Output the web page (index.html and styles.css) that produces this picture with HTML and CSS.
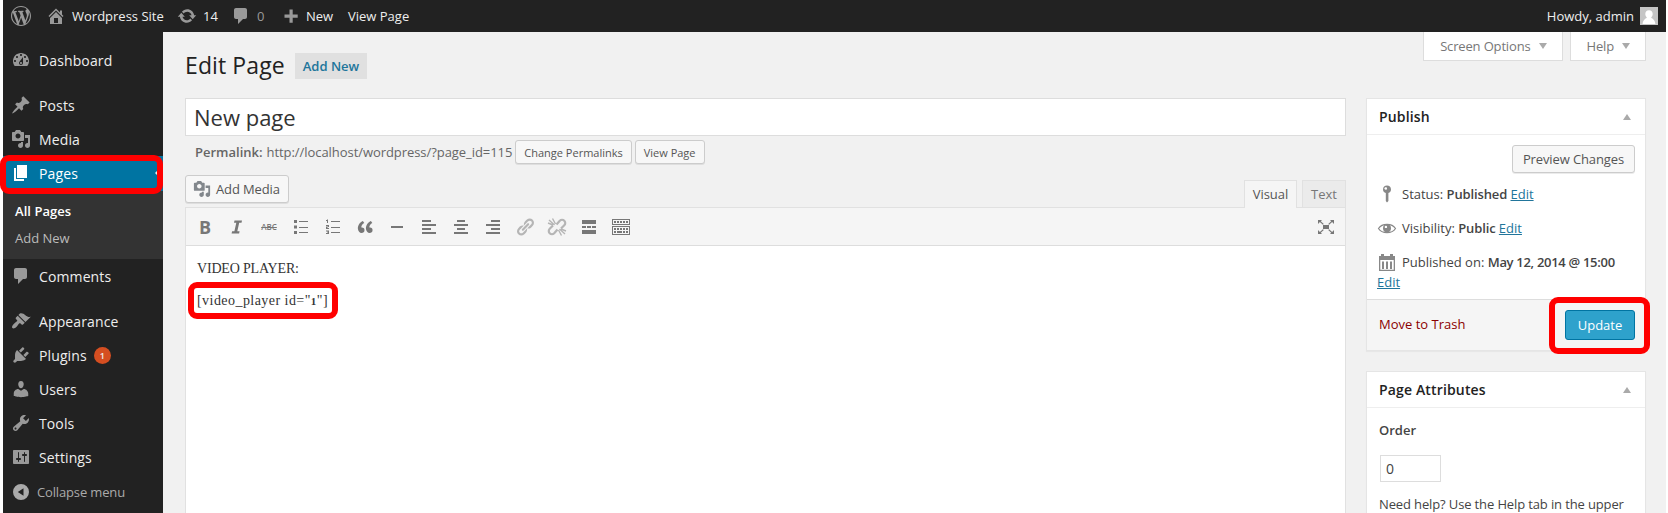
FILE: index.html
```html
<!DOCTYPE html>
<html lang="en">
<head>
<meta charset="utf-8">
<title>Edit Page</title>
<link rel="stylesheet" href="styles.css">
</head>
<body>
<svg class="defs" width="0" height="0">
  <symbol id="media" viewBox="0 0 20 20"><path d="M13 11V4c0-.55-.45-1-1-1h-1.67L9 1H5L3.67 3H2c-.55 0-1 .45-1 1v7c0 .55.45 1 1 1h10c.55 0 1-.45 1-1zM7 4.5c1.38 0 2.5 1.12 2.5 2.5S8.38 9.5 7 9.5 4.5 8.38 4.5 7 5.62 4.5 7 4.5zM14 6h5v10.5c0 1.38-1.12 2.5-2.5 2.5S14 17.88 14 16.5s1.12-2.5 2.5-2.5c.17 0 .34.02.5.05V9h-3V6zm-4 8.05V13h2v3.5c0 1.38-1.12 2.5-2.5 2.5S7 17.88 7 16.5 8.12 14 9.5 14c.17 0 .34.02.5.05z"/></symbol>
  <symbol id="comment" viewBox="0 0 20 20"><path d="M5 2h9c1.1 0 2 .9 2 2v7c0 1.1-.9 2-2 2h-2l-5 5v-5H5c-1.1 0-2-.9-2-2V4c0-1.1.9-2 2-2z"/></symbol>
</svg>
<div class="screen">
  <header class="adminbar">
    <svg class="icon ab-logo" viewBox="0 0 20 20"><path d="M20 10c0-5.51-4.49-10-10-10C4.48 0 0 4.49 0 10c0 5.52 4.48 10 10 10 5.51 0 10-4.48 10-10zM7.78 15.37L4.37 6.22c.55-.02 1.17-.08 1.17-.08.5-.06.44-1.13-.06-1.11 0 0-1.45.11-2.37.11-.18 0-.37 0-.58-.01C4.12 2.69 6.87 1.11 10 1.11c2.33 0 4.45.87 6.05 2.34-.68-.11-1.65.39-1.65 1.58 0 .74.45 1.36.9 2.1.35.61.55 1.36.55 2.46 0 1.49-1.4 5-1.4 5l-3.03-8.37c.54-.02.82-.17.82-.17.5-.05.44-1.25-.06-1.22 0 0-1.44.12-2.38.12-.87 0-2.33-.12-2.33-.12-.5-.03-.56 1.2-.06 1.22l.92.08 1.26 3.41zM17.41 10c.24-.64.74-1.87.43-4.25.7 1.29 1.05 2.71 1.05 4.25 0 3.29-1.73 6.24-4.4 7.78.97-2.59 1.94-5.2 2.92-7.78zM6.1 18.09C3.12 16.65 1.11 13.53 1.11 10c0-1.3.23-2.48.72-3.59C3.25 10.3 4.67 14.2 6.1 18.09zm4.03-6.63l2.58 6.98c-.86.29-1.76.45-2.71.45-.79 0-1.57-.11-2.29-.33.81-2.38 1.62-4.74 2.42-7.1z"/></svg>
    <span class="ab-item ab-site"><svg class="icon" viewBox="0 0 20 20"><path d="M16 8.5l1.53 1.53-1.06 1.06L10 4.6l-6.47 6.49-1.06-1.06L10 2.5l4 4v-2h2v4zm-6-2.46l6 5.99V18H4v-5.97zM12 17v-5H8v5h4z"/></svg><span>Wordpress Site</span></span>
    <span class="ab-item ab-updates"><svg class="icon" viewBox="0 0 20 20"><path d="M10.2 3.28c3.53 0 6.43 2.61 6.92 6h2.08l-3.5 4-3.5-4h2.32c-.45-1.97-2.21-3.45-4.32-3.45-1.45 0-2.73.71-3.54 1.78L4.95 5.66C6.23 4.2 8.11 3.28 10.2 3.28zm-.4 13.44c-3.52 0-6.43-2.61-6.92-6H.8l3.5-4 3.5 4H5.48c.45 1.97 2.21 3.45 4.32 3.45 1.45 0 2.73-.71 3.54-1.78l1.71 1.95c-1.28 1.46-3.15 2.38-5.25 2.38z"/></svg><span>14</span></span>
    <span class="ab-item ab-comments"><svg class="icon"><use href="#comment"/></svg><span>0</span></span>
    <span class="ab-item ab-new"><svg class="icon" viewBox="0 0 20 20"><path d="M8.5 3.5h3.2v5h5v3.2h-5v5H8.500v-5h-5V8.500h5z"/></svg><span>New</span></span>
    <span class="ab-item ab-view">View Page</span>
    <span class="ab-item ab-user">Howdy, admin
      <svg class="avatar" viewBox="0 0 18 18"><rect width="18" height="18" fill="#c5c5c5"/><path d="M9 3.200c2.300 0 3.700 1.600 3.700 3.800 0 1.500-.6 2.800-1.600 3.500.2 1 3.900 1.300 4.300 6.500H2.600c.4-5.200 4.100-5.500 4.300-6.500-1-.7-1.600-2-1.600-3.500 0-2.200 1.400-3.800 3.700-3.800z" fill="#fff"/></svg></span>
  </header>

  <div class="body">
    <nav class="menu">
      <a class="item"><svg class="icon" viewBox="0 0 20 20"><path d="M3.76 16h12.48c1.1-1.37 1.76-3.11 1.76-5 0-4.42-3.58-8-8-8s-8 3.580-8 8c0 1.890.66 3.630 1.760 5zM10 4c.55 0 1 .45 1 1s-.45 1-1 1-1-.45-1-1 .45-1 1-1zM6 6c.55 0 1 .45 1 1s-.45 1-1 1-1-.45-1-1 .45-1 1-1zm8 0c.55 0 1 .45 1 1s-.45 1-1 1-1-.45-1-1 .45-1 1-1zm-5.370 5.550L12 7v6c0 1.100-.9 2-2 2s-2-.9-2-2c0-.57.24-1.080.63-1.450zM4 10c.55 0 1 .45 1 1s-.45 1-1 1-1-.45-1-1 .45-1 1-1zm12 0c.55 0 1 .45 1 1s-.45 1-1 1-1-.45-1-1 .45-1 1-1zm-5 3c0-.55-.45-1-1-1s-1 .45-1 1 .45 1 1 1 1-.45 1-1z"/></svg>Dashboard</a>
      <div class="sep"></div>
      <a class="item"><svg class="icon" viewBox="0 0 20 20"><path d="M10.440 3.020l1.820-1.820 6.360 6.350-1.830 1.820c-1.050-.68-2.480-.57-3.410.36l-.75.75c-.92.93-1.040 2.350-.35 3.410l-1.830 1.820-2.410-2.410-2.800 2.790c-.42.42-3.380 2.710-3.800 2.290s1.860-3.390 2.280-3.810l2.790-2.790L4.100 9.360l1.830-1.820c1.050.69 2.480.57 3.400-.36l.75-.75c.93-.92 1.050-2.350.36-3.410z"/></svg>Posts</a>
      <a class="item"><svg class="icon"><use href="#media"/></svg>Media</a>
      <a class="item current"><svg class="icon" viewBox="0 0 20 20"><path d="M6 15V2h10v13H6zm-1 1h8v2H3V5h2v11z"/></svg>Pages</a>
      <div class="submenu"><a class="on">All Pages</a><a>Add New</a></div>
      <a class="item"><svg class="icon"><use href="#comment"/></svg>Comments</a>
      <div class="sep"></div>
      <a class="item"><svg class="icon" viewBox="0 0 20 20"><path d="M14.480 11.060L7.410 3.990l1.500-1.500c.5-.56 2.300-.47 3.510.32 1.210.8 1.430 1.280 2.910 2.100 1.180.64 2.450 1.260 4.450.85zm-.71.71L6.700 4.700 4.930 6.470c-.39.39-.39 1.020 0 1.410l1.060 1.060c.39.39.39 1.030 0 1.420-.6.6-1.430 1.110-2.210 1.690-.35.26-.7.53-1.010.84C1.430 14.230.4 16.080 1.400 17.070c.99 1 2.840-.03 4.180-1.360.31-.31.58-.66.85-1.020.57-.78 1.080-1.610 1.690-2.210.39-.39 1.020-.39 1.410 0l1.060 1.060c.39.39 1.020.39 1.410 0z"/></svg>Appearance</a>
      <a class="item"><svg class="icon" viewBox="0 0 20 20"><path d="M13.110 4.360L9.870 7.600 8 5.730l3.240-3.240c.35-.34 1.050-.2 1.560.32.52.51.66 1.210.31 1.550zm-8 1.770l.91-1.120 9.010 9.010-1.190.84c-.71.71-2.630 1.160-3.820 1.160H6.140L4.900 17.260c-.59.59-1.540.59-2.120 0-.59-.58-.59-1.530 0-2.120l1.240-1.240v-3.880c0-1.130.4-3.190 1.090-3.890zm7.260 3.970l3.240-3.240c.34-.35 1.040-.21 1.550.31.52.51.66 1.210.31 1.550l-3.240 3.250z"/></svg>Plugins<span class="count">1</span></a>
      <a class="item"><svg class="icon" viewBox="0 0 20 20"><path d="M10 9.250c-2.270 0-2.730-3.440-2.730-3.440C7 4.020 7.820 2 9.970 2c2.160 0 2.980 2.020 2.710 3.810 0 0-.41 3.440-2.680 3.440zm0 2.570L12.720 10c2.390 0 4.520 2.330 4.520 4.530v2.490s-3.650 1.130-7.240 1.130c-3.650 0-7.240-1.130-7.240-1.130v-2.490c0-2.250 1.940-4.480 4.470-4.480z"/></svg>Users</a>
      <a class="item"><svg class="icon" viewBox="0 0 20 20"><path d="M16.680 9.770c-1.340 1.340-3.300 1.670-4.950.99l-5.410 6.520c-.99.99-2.590.99-3.580 0s-.99-2.590 0-3.570l6.520-5.420c-.68-1.650-.35-3.610.99-4.950 1.280-1.280 3.120-1.620 4.720-1.060l-2.890 2.890 2.820 2.820 2.860-2.870c.53 1.580.18 3.390-1.080 4.650zM3.810 16.210c.4.39 1.040.39 1.430 0 .4-.4.4-1.040 0-1.430-.39-.4-1.030-.4-1.430 0-.39.39-.39 1.030 0 1.430z"/></svg>Tools</a>
      <a class="item"><svg class="icon" viewBox="0 0 20 20"><path d="M18 16V4c0-.55-.45-1-1-1H3c-.55 0-1 .45-1 1v12c0 .55.45 1 1 1h14c.55 0 1-.45 1-1zM8 11h1c.55 0 1 .45 1 1s-.45 1-1 1H8v1.500c0 .28-.22.5-.5.5s-.5-.22-.5-.5V13H6c-.55 0-1-.45-1-1s.45-1 1-1h1V5.500c0-.28.22-.5.5-.5s.5.220.5.5V11zm5-2h-1c-.55 0-1-.45-1-1s.45-1 1-1h1V5.500c0-.28.22-.5.5-.5s.5.220.5.5V7h1c.55 0 1 .45 1 1s-.45 1-1 1h-1v5.500c0 .28-.22.5-.5.5s-.5-.22-.5-.5V9z"/></svg>Settings</a>
      <a class="item collapse"><svg class="icon" viewBox="0 0 20 20"><path fill-rule="evenodd" d="M10 2a8 8 0 1 0 0 16 8 8 0 0 0 0-16zM12.500 6.300v7.400L6.800 10z"/></svg>Collapse menu</a>
    </nav>

    <main class="content">
      <div class="top">
        <h1>Edit Page</h1>
        <a class="add-new">Add New</a>
        <div class="meta-links">
          <a class="meta">Screen Options<i class="tri down"></i></a>
          <a class="meta">Help<i class="tri down"></i></a>
        </div>
      </div>
      <div class="columns">
        <section class="editor-col">
          <div class="title-input">New page</div>
          <div class="permalink"><b>Permalink:</b><span class="url">http://localhost/wordpress/?page_id=115</span><a class="btn small">Change Permalinks</a><a class="btn small view">View Page</a></div>
          <div class="tools">
            <a class="btn add-media"><svg class="icon"><use href="#media"/></svg><span>Add Media</span></a>
            <div class="tabs"><a class="tab active">Visual</a><a class="tab">Text</a></div>
          </div>
          <div class="editor">
            <div class="toolbar">
              <span class="tb bold">B</span>
              <span class="tb"><svg viewBox="0 0 20 20"><path d="M7.500 3.500h7.500l-.5 2.200h-2.300l-1.900 8.600h2.300l-.5 2.200H4.600l.5-2.200h2.300l1.900-8.600H7z"/></svg></span>
              <span class="tb strike">ABC</span>
              <span class="tb"><svg viewBox="0 0 20 20"><path d="M3 3h3v3H3zM3 8.500h3v3H3zM3 14h3v3H3zM8 4h9v1H8zM8 10h9v1H8zM8 15h9v1H8z"/></svg></span>
              <span class="tb"><svg viewBox="0 0 20 20"><path d="M8 4h9v1H8zM8 10h9v1H8zM8 15h9v1H8zM4 2.500h1V6H4zM3 3h1v1H3zM3 8h3v2H4.500v1H6v1H3V9.500h2V9H3zM3 13.500h3V17H3v-1h2v-.5H4v-.7h1v-.4H3z"/></svg></span>
              <span class="tb"><svg viewBox="0 0 20 20"><path d="M9.490 13.220c0-.74-.2-1.380-.61-1.900-.62-.78-1.830-.88-2.530-.72-.29-1.650 1.110-3.750 2.920-4.650L7.880 4c-2.730 1.300-5.420 4.280-4.960 8.050C3.210 14.430 4.590 16 6.540 16c.85 0 1.560-.25 2.120-.75s.83-1.180.83-2.030zm8.050 0c0-.74-.2-1.380-.61-1.900-.63-.78-1.830-.88-2.530-.72-.29-1.650 1.110-3.750 2.920-4.650L15.930 4c-2.730 1.300-5.410 4.280-4.950 8.050.29 2.380 1.660 3.950 3.610 3.950.85 0 1.560-.25 2.120-.75s.83-1.180.83-2.030z"/></svg></span>
              <span class="tb"><svg viewBox="0 0 20 20"><path d="M4 9h12v2H4z"/></svg></span>
              <span class="tb"><svg viewBox="0 0 20 20"><path d="M3 3h9v2H3zM3 7h14v2H3zM3 11h9v2H3zM3 15h14v2H3z"/></svg></span>
              <span class="tb"><svg viewBox="0 0 20 20"><path d="M6 3h8v2H6zM3 7h14v2H3zM6 11h8v2H6zM3 15h14v2H3z"/></svg></span>
              <span class="tb"><svg viewBox="0 0 20 20"><path d="M8 3h9v2H8zM3 7h14v2H3zM8 11h9v2H8zM3 15h14v2H3z"/></svg></span>
              <span class="tb off"><svg viewBox="0 0 20 20"><path d="M17.740 2.760c1.680 1.690 1.680 4.410 0 6.100l-1.530 1.520c-1.120 1.120-2.700 1.470-4.140 1.090l2.620-2.610.76-.77.76-.76c.84-.84.84-2.200 0-3.040-.84-.85-2.200-.85-3.040 0l-.77.76-3.380 3.380c-.37-1.440-.02-3.020 1.100-4.140l1.520-1.530c1.690-1.680 4.420-1.680 6.100 0zM8.590 13.430l5.340-5.340c.42-.42.42-1.100 0-1.520-.44-.43-1.130-.39-1.530 0l-5.330 5.340c-.42.42-.42 1.100 0 1.520.44.43 1.130.39 1.520 0zm-.76 2.290l4.140-4.150c.38 1.440.03 3.020-1.090 4.140l-1.520 1.530c-1.690 1.680-4.410 1.680-6.100 0-1.680-1.680-1.680-4.420 0-6.100l1.530-1.520c1.120-1.120 2.700-1.470 4.140-1.100l-4.140 4.150c-.85.84-.85 2.200 0 3.050.84.84 2.200.84 3.040 0z"/></svg></span>
              <span class="tb off"><svg viewBox="0 0 20 20"><g fill="none" stroke="currentColor" stroke-width="2.200"><path d="M9.500 7.500l3.300-3.800a3.100 3.100 0 0 1 4.500 4.500L14 11.500M10.500 12.500l-3.300 3.800a3.100 3.100 0 0 1-4.500-4.500L6 8.500"/><path stroke-width="1.400" d="M2 3l5.500 5M5.500 1.500L8.500 7M1 6l5 2M18 17l-5.500-5M14.500 18.500L11.500 13M19 14l-5-2"/></g></svg></span>
              <span class="tb"><svg viewBox="0 0 20 20"><path d="M3 3h14v4H3zM3 9h4v2H3zM8 9h4v2H8zM13 9h4v2h-4zM3 13h14v4H3z"/></svg></span>
              <span class="tb"><svg viewBox="0 0 20 20"><path fill-rule="evenodd" d="M1 2h18v6H1zM2 3v4h16V3zM1 9h18v9H1zM2 10v7h16v-7z"/><path d="M3 4h2v2H3zM6 4h2v2H6zM9 4h2v2H9zM12 4h2v2h-2zM15 4h2v2h-2zM3 11h2v2H3zM6 11h2v2H6zM9 11h2v2H9zM12 11h2v2h-2zM15 11h2v2h-2zM3 14h2v2H3zM6 14h5v2H6zM12 14h2v2h-2zM15 14h2v2h-2z"/></svg></span>
              <span class="tb full"><svg viewBox="0 0 20 20"><path d="M2 3h4L4.800 4.200l3 2.700-.9.900-3-2.700L2 7zM18 3h-4l1.200 1.200-3 2.700.9.900 3-2.700L18 7zM2 17h4l-1.200-1.200 3-2.700-.9-.9-3 2.700L2 13zM18 17h-4l1.200-1.200-3-2.700.9-.9 3 2.700L18 13zM7 8h6v4H7z"/></svg></span>
            </div>
            <div class="document">
              <p class="line-a">VIDEO PLAYER:</p>
              <p class="line-b">[video_player id="<span class="old">1</span>"]</p>
            </div>
          </div>
        </section>

        <aside class="side-col">
          <div class="box">
            <h2>Publish<i class="tri up"></i></h2>
            <div class="misc">
              <div class="preview"><a class="btn">Preview Changes</a></div>
              <div class="row"><svg class="icon" viewBox="0 0 20 20"><path fill-rule="evenodd" d="M10 1.500c2.300 0 4 1.700 4 3.900 0 1.700-1 3-2.600 3.600V17l-1.400 1.500L8.800 17V9C7.100 8.400 6 7.100 6 5.400c0-2.200 1.700-3.900 4-3.900zM8.800 3.300c-.9 0-1.400.6-1.400 1.300s.5 1.200 1.300 1.200S10 5.300 10 4.500 9.600 3.300 8.800 3.300z"/></svg><span>Status: <b>Published</b> <a class="link">Edit</a></span></div>
              <div class="row"><svg class="icon" viewBox="0 0 20 20"><path d="M1.500 10.500C5 5 15 5 18.500 10.500 15 16 5 16 1.500 10.500z" fill="none" stroke="currentColor" stroke-width="1.200"/><circle cx="10" cy="10.300" r="4"/><circle cx="8.900" cy="8.900" r="1.200" fill="#fff"/></svg><span>Visibility: <b>Public</b> <a class="link">Edit</a></span></div>
              <div class="row date"><svg class="icon" viewBox="0 0 20 20"><path fill-rule="evenodd" d="M2 4h2V2h3v2h6V2h3v2h2v15H2zM3.300 8v9.800h13.400V8zM5 9.500h2V17H5zM9 9.500h2V17H9zM13 9.500h2V17h-2z"/></svg><span>Published on: <b>May 12, 2014 @ 15:00</b></span></div>
              <a class="link date-edit">Edit</a>
            </div>
            <div class="actions"><a class="trash">Move to Trash</a><a class="primary">Update</a></div>
          </div>
          <div class="box attributes">
            <h2>Page Attributes<i class="tri up"></i></h2>
            <div class="fields"><b>Order</b><div class="order">0</div><p>Need help? Use the Help tab in the upper</p></div>
          </div>
        </aside>
      </div>
    </main>
  </div>
  <div class="mark mark-pages"></div>
  <div class="mark mark-code"></div>
  <div class="mark mark-update"></div>
</div>
</body>
</html>
```
FILE: styles.css
```css
* { box-sizing: border-box; }
body { margin: 0; font-family: "Open Sans", sans-serif; font-size: 13px; color: #444; background: #fff; }
h1, h2, p { margin: 0; font-weight: 400; }
b { font-weight: 600; }
.defs { display: block; }
.icon { width: 20px; height: 20px; fill: currentColor; flex: none; }
.screen { position: relative; width: 1668px; height: 513px; padding: 0 2px 0 3px; overflow: hidden; }

/* Admin bar */
.adminbar { display: flex; align-items: center; height: 32px; padding: 0 8px; background: #222; color: #eee; line-height: 32px; }
.adminbar .icon { color: #999; }
.ab-item { display: flex; align-items: center; white-space: nowrap; }
.ab-site { margin-left: 15px; gap: 6px; width: 131px; }
.ab-updates { gap: 6px; width: 54px; }
.ab-comments { gap: 6px; width: 50px; color: #999; }
.ab-new { gap: 5px; width: 67px; }
.ab-user { margin-left: auto; gap: 6px; }
.avatar { width: 18px; height: 18px; }

/* Side menu */
.body { display: flex; height: 481px; }
.menu { width: 160px; flex: none; padding-top: 11px; background: #222; color: #eee; }
.item { display: flex; align-items: center; height: 34px; padding-left: 8px; gap: 8px; font-size: 14px; letter-spacing: .12px; }
.item .icon { color: #999; }
.sep { height: 11px; }
.current { height: 35px; padding-bottom: 1px; background: #0074a2; color: #fff; position: relative; }
.current .icon { color: #fff; }
.current::after { content: ""; position: absolute; right: 0; top: 9px; border: 8px solid transparent; border-left-width: 0; border-right-color: #f1f1f1; }
.submenu { display: flex; flex-direction: column; height: 68px; padding: 7px 12px; background: #333; font-size: 13px; line-height: 27px; color: #bbb; }
.submenu .on { color: #fff; font-weight: 600; letter-spacing: .05px; }
.count { display: flex; align-items: center; justify-content: center; width: 17px; height: 17px; margin-left: -1px; border-radius: 50%; background: #d54e21; font-size: 9px; font-weight: 600; }
.collapse { height: 35px; gap: 6px; font-size: 13px; color: #aaa; letter-spacing: -.15px; }
.collapse .icon { color: #aaa; }

/* Content */
.content { flex: 1; min-width: 0; padding: 0 20px 0 22px; background: #f1f1f1; }
.top { display: flex; height: 66px; }
h1 { padding-top: 16px; font-size: 23px; line-height: 34px; color: #222; letter-spacing: .1px; }
.add-new { align-self: flex-start; margin: 21px 0 0 10px; padding: 0 8px; background: #e0e0e0; color: #21759b; font-weight: 600; line-height: 26px; }
.meta-links { display: flex; align-items: flex-start; gap: 7px; margin-left: auto; }
.meta { display: flex; align-items: center; height: 29px; padding: 0 15px 0 16px; gap: 8px; background: #fff; border: 1px solid #ddd; border-top: 0; color: #777; letter-spacing: -.16px; }
.tri { border: 4px solid transparent; }
.down { border-top: 6px solid #aaa; border-bottom: 0; }
.up { border-bottom: 6px solid #aaa; border-top: 0; }
.columns { display: grid; grid-template-columns: 1161px 280px; column-gap: 20px; }
.title-input { height: 38px; padding-left: 8px; border: 1px solid #ddd; background: #fff; color: #333; font-size: 22px; line-height: 36px; }
.permalink { display: flex; align-items: center; height: 32px; padding-left: 10px; color: #666; }
.url { margin-left: 4px; letter-spacing: -.06px; }
.btn { display: flex; align-items: center; height: 28px; padding: 0 10px; border: 1px solid #ccc; border-radius: 3px; background: #f7f7f7; color: #555; box-shadow: 0 1px 0 rgba(0,0,0,.08); white-space: nowrap; }
.btn.small { height: 24px; padding: 0 8px; font-size: 11px; margin-left: 3px; }
.tools { display: flex; justify-content: space-between; height: 39px; padding-top: 7px; }
.add-media { padding: 0 8px 0 7px; gap: 5px; letter-spacing: -.12px; }
.add-media .icon { width: 18px; height: 18px; color: #82878c; }
.tabs { display: flex; gap: 5px; padding-top: 5px; }
.tab { width: 44px; height: 27px; border: 1px solid #e1e1e1; border-bottom: 0; background: #ebebeb; color: #777; line-height: 27px; text-align: center; }
.tab.active { width: 53px; height: 28px; background: #f5f5f5; color: #555; position: relative; z-index: 1; }
.editor { height: 320px; border: 1px solid #e1e1e1; background: #fff; }
.toolbar { display: flex; align-items: center; height: 38px; padding: 0 9px; gap: 12px; background: #f5f5f5; border-bottom: 1px solid #ddd; color: #777; }
.tb { display: flex; align-items: center; justify-content: center; width: 20px; height: 20px; flex: none; }
.tb svg { width: 20px; height: 20px; fill: currentColor; }
.bold { font-size: 18px; font-weight: 700; }
.strike { font-size: 8px; font-weight: 600; text-decoration: line-through; }
.off { color: #b5b5b5; }
.full { margin-left: auto; }
.document { padding: 11px; font-family: "Liberation Serif", serif; font-size: 14px; line-height: 24px; color: #333; }
.line-a { height: 32px; letter-spacing: -.18px; }
.line-b { letter-spacing: .45px; }
.old { font-size: 11px; font-weight: 700; }

/* Meta boxes */
.box { border: 1px solid #e5e5e5; background: #fff; box-shadow: 0 1px 1px rgba(0,0,0,.04); }
.box h2 { display: flex; align-items: center; justify-content: space-between; height: 36px; padding: 0 14px 0 12px; border-bottom: 1px solid #eee; color: #222; font-size: 14px; font-weight: 600; letter-spacing: .15px; }
.misc { height: 164px; padding: 10px; }
.misc b { letter-spacing: -.14px; }
.misc .date b { letter-spacing: -.3px; }
.preview { display: flex; justify-content: flex-end; height: 32px; letter-spacing: -.12px; }
.row { display: flex; align-items: center; height: 34px; gap: 5px; white-space: nowrap; }
.link { color: #21759b; text-decoration: underline; }
.row .icon { color: #888; }
.date-edit { display: block; line-height: 18px; margin-top: -6px; }
.actions { display: flex; align-items: center; justify-content: space-between; height: 51px; padding: 0 10px 0 12px; border-top: 1px solid #ddd; background: #f5f5f5; }
.trash { color: #8b0000; padding-bottom: 2px; }
.primary { display: flex; align-items: center; justify-content: center; width: 70px; height: 30px; border: 1px solid #0074a2; border-radius: 3px; background: #2ea2cc; color: #fff; }
.attributes { height: 300px; margin-top: 20px; }
.fields { display: flex; flex-direction: column; padding: 12px; line-height: 20px; white-space: nowrap; }
.fields p { letter-spacing: -.13px; }
.order { width: 61px; height: 27px; margin: 15px 0 12px 1px; padding-left: 5px; border: 1px solid #ddd; font-size: 14px; line-height: 25px; }

/* Highlight outlines */
.mark { position: absolute; border: 6px solid #f00; border-radius: 9px; }
.mark-pages { left: 0; top: 155px; width: 163px; height: 39px; }
.mark-code { left: 188px; top: 282px; width: 150px; height: 37px; }
.mark-update { left: 1549px; top: 297px; width: 101px; height: 57px; }
```
